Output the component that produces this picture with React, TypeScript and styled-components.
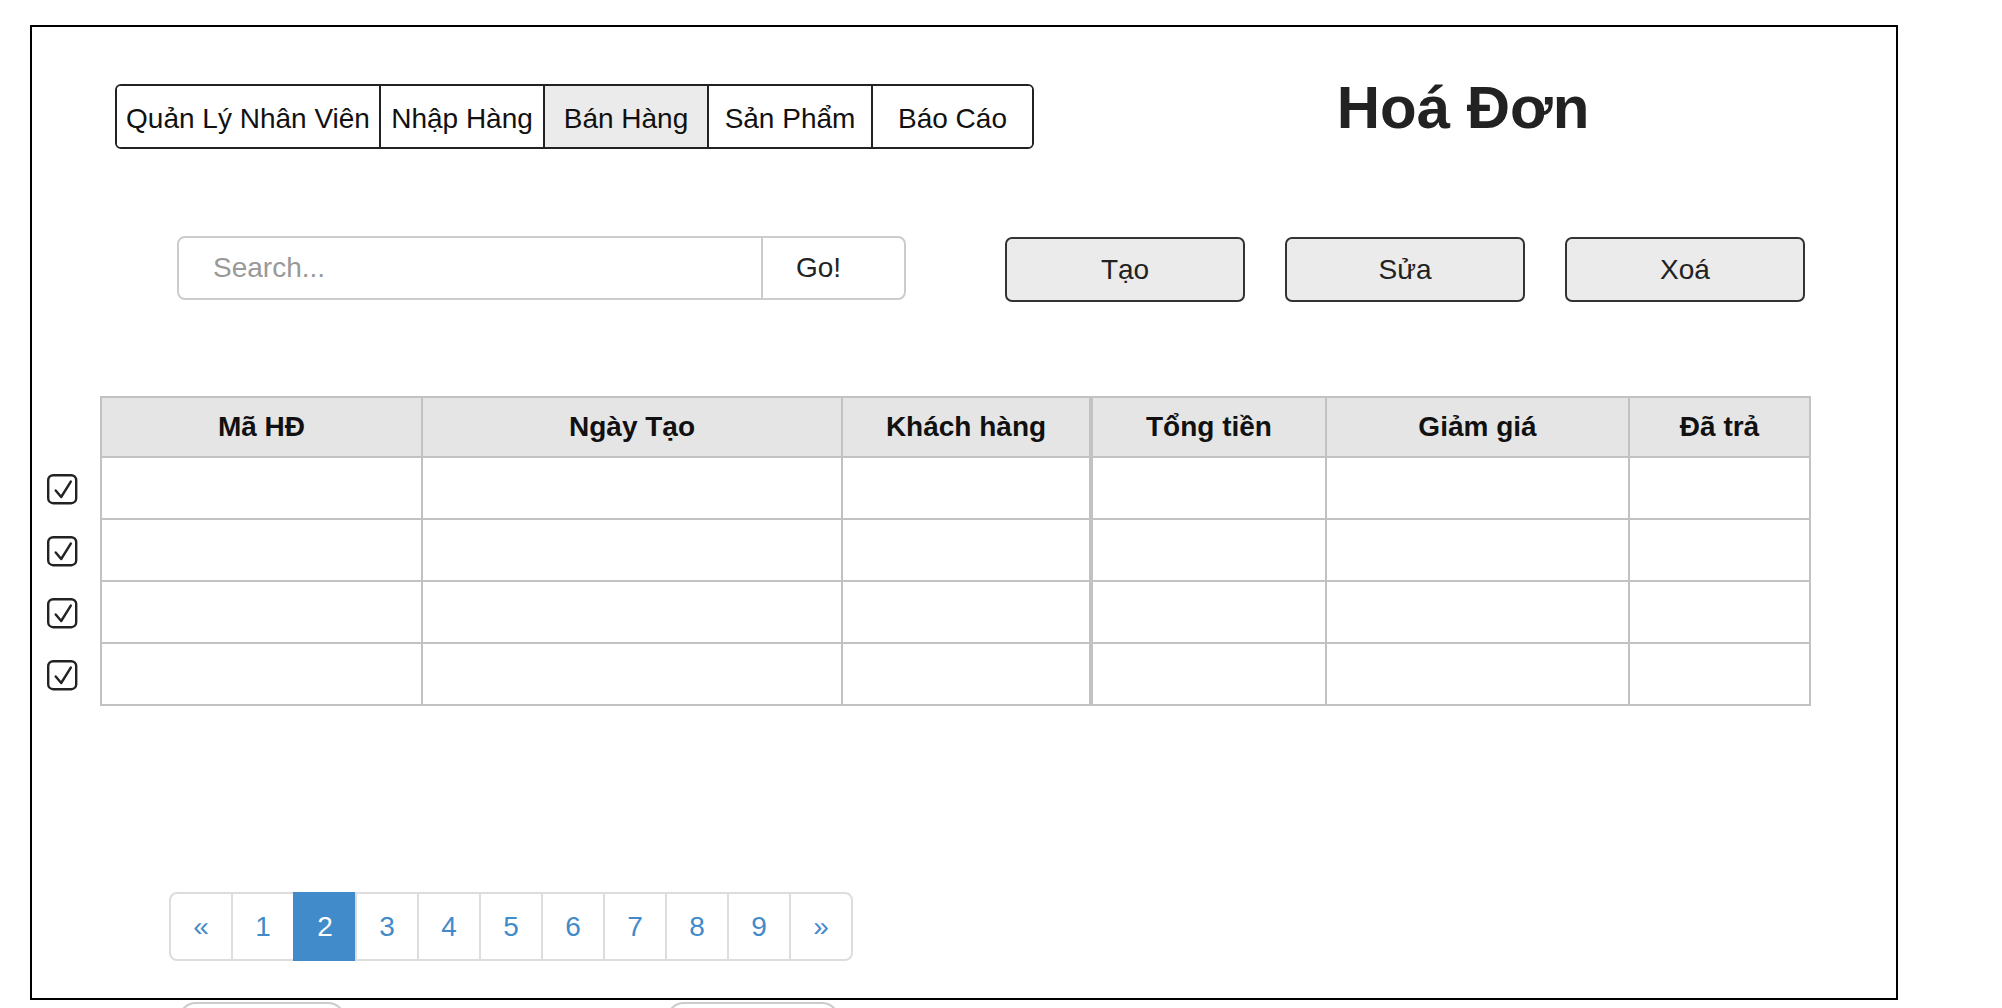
import React from "react";
import styled, { createGlobalStyle } from "styled-components";

const GlobalStyle = createGlobalStyle`
  html, body {
    margin: 0;
    padding: 0;
    background: #fff;
    overflow: hidden;
  }
  body {
    font-family: "Liberation Sans", Arial, Helvetica, sans-serif;
    color: #222;
  }
  * { box-sizing: border-box; }
`;

const Page = styled.div`
  padding: 25px 0 0 30px;
`;

const Frame = styled.div`
  width: 1868px;
  height: 975px;
  border: 2px solid #000;
  display: flex;
  flex-direction: column;
`;

const HeaderRow = styled.div`
  display: flex;
  align-items: flex-start;
  padding: 57px 0 0 83px;
`;

const Nav = styled.div`
  display: flex;
  border: 2px solid #222;
  border-radius: 6px;
  overflow: hidden;
`;

const NavItem = styled.div<{ $width: number; $active?: boolean }>`
  width: ${(p) => p.$width}px;
  height: 61px;
  line-height: 65px;
  font-size: 28px;
  text-align: center;
  white-space: nowrap;
  color: #111;
  background: ${(p) => (p.$active ? "#ebebeb" : "#fff")};
  & + & {
    border-left: 2px solid #222;
  }
`;

const Title = styled.h1`
  margin: -8px 0 0 0;
  width: 858px;
  text-align: center;
  font-size: 60px;
  line-height: 64px;
  font-weight: 700;
  color: #222;
`;

const SearchRow = styled.div`
  display: flex;
  align-items: flex-start;
  margin-top: 87px;
  padding-left: 145px;
`;

const SearchGroup = styled.div`
  display: flex;
  width: 730px;
`;

const SearchInput = styled.input`
  width: 586px;
  height: 64px;
  border: 2px solid #ccc;
  border-radius: 8px 0 0 8px;
  padding: 0 0 0 34px;
  font-family: inherit;
  font-size: 28px;
  color: #222;
  outline: none;
  &::placeholder {
    color: #999;
  }
`;

const GoButton = styled.button`
  margin-left: -2px;
  height: 64px;
  border: 2px solid #ccc;
  border-radius: 0 8px 8px 0;
  background: #fff;
  padding: 0 63px 0 33px;
  font-family: inherit;
  font-size: 28px;
  color: #222;
`;

const ActionBar = styled.div`
  display: flex;
  gap: 40px;
  margin: 1px 0 0 98px;
`;

const ActionButton = styled.button`
  width: 240px;
  height: 65px;
  background: #ebebeb;
  border: 2px solid #333;
  border-radius: 7px;
  font-family: inherit;
  font-size: 28px;
  color: #222;
`;

const TableArea = styled.div`
  display: flex;
  margin-top: 94px;
`;

const CheckColumn = styled.div`
  width: 68px;
  padding: 62px 0 0 15px;
  display: flex;
  flex-direction: column;
`;

const CheckCell = styled.div`
  height: 62px;
  display: flex;
  align-items: center;
`;

const Grid = styled.div`
  display: grid;
  grid-template-columns: 321px 420px 250px 234px 303px 181px;
  border-top: 2px solid #c2c2c2;
  border-left: 2px solid #c2c2c2;
`;

const HeadCell = styled.div<{ $thick?: boolean }>`
  height: 60px;
  background: #e5e5e5;
  border-right: ${(p) => (p.$thick ? 4 : 2)}px solid #c2c2c2;
  border-bottom: 2px solid #c2c2c2;
  display: flex;
  align-items: center;
  justify-content: center;
  font-size: 28px;
  font-weight: 700;
  color: #111;
  white-space: nowrap;
`;

const BodyCell = styled.div<{ $thick?: boolean }>`
  height: 62px;
  background: #fff;
  border-right: ${(p) => (p.$thick ? 4 : 2)}px solid #c2c2c2;
  border-bottom: 2px solid #c2c2c2;
`;

const Pagination = styled.div`
  display: flex;
  margin-top: 186px;
  padding-left: 137px;
`;

const PageItem = styled.div<{ $active?: boolean }>`
  width: 64px;
  height: 69px;
  border: 2px solid ${(p) => (p.$active ? "#428bca" : "#ddd")};
  background: ${(p) => (p.$active ? "#428bca" : "#fff")};
  color: ${(p) => (p.$active ? "#fff" : "#428bca")};
  font-size: 28px;
  display: flex;
  align-items: center;
  justify-content: center;
  & + & {
    margin-left: -2px;
  }
  &:first-child {
    border-radius: 8px 0 0 8px;
  }
  &:last-child {
    border-radius: 0 8px 8px 0;
  }
`;

const BottomRow = styled.div`
  display: flex;
  margin-top: 2px;
  padding-left: 148px;
  gap: 320px;
`;

const GhostBox = styled.div<{ $width: number }>`
  width: ${(p) => p.$width}px;
  height: 48px;
  border: 2px solid #ccc;
  border-radius: 18px;
`;

const CheckIcon = () => (
  <svg width="31" height="31" viewBox="0 0 31 31" fill="none">
    <rect x="1.2" y="1.2" width="28" height="28" rx="5" stroke="#222" strokeWidth="2.4" />
    <path
      d="M8.7 16.4 L14.2 23 L23.8 7.6"
      stroke="#222"
      strokeWidth="2.4"
      strokeLinecap="round"
      strokeLinejoin="round"
    />
  </svg>
);

const navItems: { label: string; width: number; active?: boolean }[] = [
  { label: "Quản Lý Nhân Viên", width: 262 },
  { label: "Nhập Hàng", width: 164 },
  { label: "Bán Hàng", width: 164, active: true },
  { label: "Sản Phẩm", width: 164 },
  { label: "Báo Cáo", width: 161 },
];

const columns = ["Mã HĐ", "Ngày Tạo", "Khách hàng", "Tổng tiền", "Giảm giá", "Đã trả"];
const rows = [0, 1, 2, 3];
const pages = ["«", "1", "2", "3", "4", "5", "6", "7", "8", "9", "»"];

export default function App() {
  return (
    <>
      <GlobalStyle />
      <Page>
        <Frame>
          <HeaderRow>
            <Nav>
              {navItems.map((n) => (
                <NavItem key={n.label} $width={n.width} $active={n.active}>
                  {n.label}
                </NavItem>
              ))}
            </Nav>
            <Title>Hoá Đơn</Title>
          </HeaderRow>

          <SearchRow>
            <SearchGroup>
              <SearchInput placeholder="Search..." />
              <GoButton>Go!</GoButton>
            </SearchGroup>
            <ActionBar>
              <ActionButton>Tạo</ActionButton>
              <ActionButton>Sửa</ActionButton>
              <ActionButton>Xoá</ActionButton>
            </ActionBar>
          </SearchRow>

          <TableArea>
            <CheckColumn>
              {rows.map((r) => (
                <CheckCell key={r}>
                  <CheckIcon />
                </CheckCell>
              ))}
            </CheckColumn>
            <Grid>
              {columns.map((c, i) => (
                <HeadCell key={c} $thick={i === 2}>
                  {c}
                </HeadCell>
              ))}
              {rows.map((r) =>
                columns.map((c, i) => <BodyCell key={`${r}-${c}`} $thick={i === 2} />)
              )}
            </Grid>
          </TableArea>

          <Pagination>
            {pages.map((p) => (
              <PageItem key={p} $active={p === "2"}>
                {p}
              </PageItem>
            ))}
          </Pagination>
        </Frame>
        <BottomRow>
          <GhostBox $width={168} />
          <GhostBox $width={174} />
        </BottomRow>
      </Page>
    </>
  );
}
